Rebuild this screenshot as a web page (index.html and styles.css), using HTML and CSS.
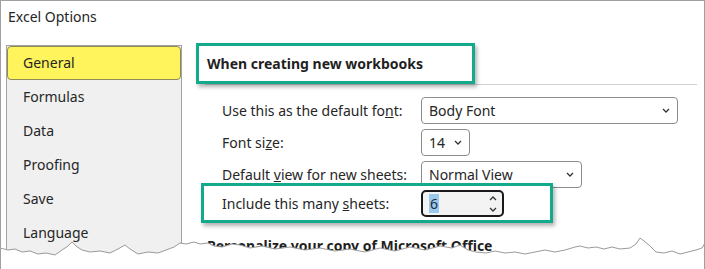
FILE: index.html
```html
<!DOCTYPE html>
<html>
  <head>
    <title>Excel Options</title>
    <link rel="stylesheet" href="styles.css">
  </head>
  <body>
    <div class="window">
      <div class="title">Excel Options</div>
      <div class="main">
        <ul class="nav">
          <li class="active">General</li>
          <li>Formulas</li>
          <li>Data</li>
          <li>Proofing</li>
          <li>Save</li>
          <li>Language</li>
        </ul>
        <div class="content">
          <div class="section-head">
            <div class="callout heading">When creating new workbooks</div>
          </div>
          <div class="settings">
            <div class="row">
              <span class="label">Use this as the default fo<u>n</u>t:</span>
              <div class="select wide">
                <span>Body Font</span>
                <svg class="chev" width="8" height="5" viewBox="0 0 8 5"><path d="M1 1l3 3 3-3" /></svg>
              </div>
            </div>
            <div class="row">
              <span class="label">Font si<u>z</u>e:</span>
              <div class="select small">
                <span>14</span>
                <svg class="chev" width="8" height="5" viewBox="0 0 8 5"><path d="M1 1l3 3 3-3" /></svg>
              </div>
            </div>
            <div class="row">
              <span class="label">Default <u>v</u>iew for new sheets:</span>
              <div class="select medium">
                <span>Normal View</span>
                <svg class="chev" width="8" height="5" viewBox="0 0 8 5"><path d="M1 1l3 3 3-3" /></svg>
              </div>
            </div>
            <div class="callout row spin-row">
              <span class="label">Include this many <u>s</u>heets:</span>
              <div class="spin">
                <span class="value"><span class="selected">6</span></span>
                <div class="arrows">
                  <svg class="chev" width="8" height="5" viewBox="0 0 8 5"><path d="M1 4l3-3 3 3" /></svg>
                  <svg class="chev" width="8" height="5" viewBox="0 0 8 5"><path d="M1 1l3 3 3-3" /></svg>
                </div>
              </div>
            </div>
          </div>
          <div class="section-title">Personalize your copy of Microsoft Office</div>
        </div>
      </div>
      <svg class="torn" width="705" height="33" viewBox="0 0 705 33">
        <polygon class="paper" points="0,12 8,14 15,13 22,16 30,15 38,18 46,17 55,19 62,14 68,10 72,6 76,10 82,14 90,16 100,15 110,17 118,13 125,9 130,13 138,18 148,16 158,17 166,14 174,11 180,7 186,8 194,6 200,8 208,7 214,10 222,11 232,8 240,9 250,12 262,10 275,13 290,11 305,14 320,12 335,15 350,13 365,16 380,12 395,15 410,11 425,14 440,10 452,12 460,9 468,14 476,16 486,17 495,15 505,17 515,16 525,18 535,16 545,14 555,16 565,14 575,11 580,10 588,12 596,11 604,13 612,11 620,13 630,12 636,8 640,2 644,5 650,10 656,16 664,17 672,15 680,18 688,16 696,14 702,12 705,7 705,33 0,33" />
        <polyline class="edge" points="0,12 8,14 15,13 22,16 30,15 38,18 46,17 55,19 62,14 68,10 72,6 76,10 82,14 90,16 100,15 110,17 118,13 125,9 130,13 138,18 148,16 158,17 166,14 174,11 180,7 186,8 194,6 200,8 208,7 214,10 222,11 232,8 240,9 250,12 262,10 275,13 290,11 305,14 320,12 335,15 350,13 365,16 380,12 395,15 410,11 425,14 440,10 452,12 460,9 468,14 476,16 486,17 495,15 505,17 515,16 525,18 535,16 545,14 555,16 565,14 575,11 580,10 588,12 596,11 604,13 612,11 620,13 630,12 636,8 640,2 644,5 650,10 656,16 664,17 672,15 680,18 688,16 696,14 702,12 705,7" />
      </svg>
    </div>
  </body>
</html>
```

FILE: styles.css
```css
body {
  margin: 0;
  font-family: "Noto Sans", "Open Sans", sans-serif;
  font-size: 14px;
  color: #262626;
}

.window {
  position: relative;
  width: 705px;
  height: 269px;
  box-sizing: border-box;
  border: 1px solid #a0a0a0;
  border-bottom: none;
  background: #fff;
  overflow: hidden;
}

.title {
  padding: 6px 0 0 7px;
  line-height: 20px;
}

.main {
  display: flex;
  align-items: flex-start;
  padding-top: 16px;
}

/* left navigation */
.nav {
  list-style: none;
  margin: 2px 0 0 5px;
  padding: 0;
  width: 176px;
  height: 240px;
  box-sizing: border-box;
  border: 1px solid #a3a3a3;
  background: #f0f0f0;
}

.nav li {
  height: 34px;
  line-height: 34px;
  padding-left: 16px;
}

.nav li.active {
  box-sizing: border-box;
  line-height: 32px;
  padding-left: 15px;
  background: #fff45c;
  border: 1px solid #8f8a55;
  border-radius: 4px;
}

/* right content */
.content {
  margin-left: 14px;
}

.callout {
  position: relative;
  box-sizing: border-box;
  border: 3px solid #13a98b;
  box-shadow: 2px 3px 4px rgba(0, 0, 0, 0.3);
  background: #fff;
}

.section-head {
  margin-left: 9px;
  width: 492px;
  border-bottom: 1px solid #d2d2d2;
}

.heading {
  margin-left: -9px;
  width: 279px;
  height: 41px;
  padding-left: 8px;
  line-height: 35px;
  font-weight: bold;
  color: #1f1f1f;
}

.settings {
  margin: 12px 0 0 5px;
}

.row {
  display: flex;
  align-items: center;
  height: 27px;
  margin-top: 5px;
  padding-left: 21px;
}

.settings .row:first-child {
  margin-top: 0;
}

.label {
  width: 199px;
}

.select {
  display: flex;
  align-items: center;
  justify-content: space-between;
  box-sizing: border-box;
  height: 27px;
  padding: 0 7px 0 7px;
  border: 1px solid #8c8c8c;
  border-radius: 4px;
  background: #fff;
}

.select.wide {
  width: 257px;
}

.select.small {
  width: 49px;
}

.select.medium {
  width: 161px;
}

.chev path {
  fill: none;
  stroke: #333;
  stroke-width: 1.3;
}

.spin-row {
  width: 352px;
  height: 40px;
  margin-top: -5px;
  padding: 4px 0 3px 18px;
}

.spin {
  display: flex;
  align-items: center;
  justify-content: space-between;
  box-sizing: border-box;
  width: 83px;
  height: 27px;
  padding: 0 5px 0 6px;
  border: 2px solid #1a1a1a;
  border-radius: 5px;
  background: #f3f3f3;
}

.selected {
  background: #99c9ef;
  padding: 0 1px;
  color: #1f2a3a;
}

.arrows {
  display: flex;
  flex-direction: column;
  gap: 6px;
}

.arrows svg {
  display: block;
}

.section-title {
  margin-top: 13px;
  padding-left: 11px;
  line-height: 20px;
  font-weight: bold;
  color: #1f1f1f;
}

/* torn paper edge */
.torn {
  position: absolute;
  left: -1px;
  top: 235px;
}

.torn .paper {
  fill: #fff;
}

.torn .edge {
  fill: none;
  stroke: #9a9a9a;
  stroke-width: 1;
}
```
